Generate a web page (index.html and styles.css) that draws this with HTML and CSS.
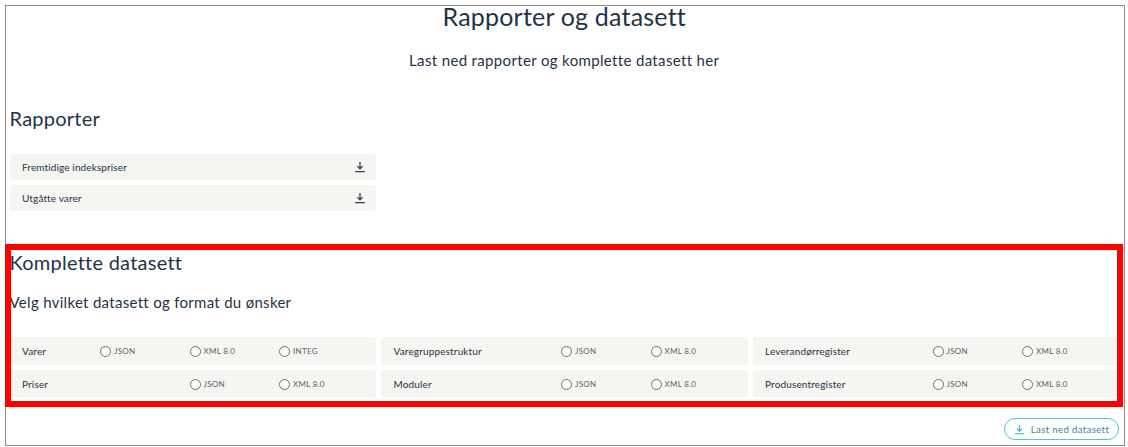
FILE: index.html
```html
<!DOCTYPE html>
<html lang="no">
<head>
<meta charset="utf-8">
<title>Rapporter og datasett</title>
<link rel="stylesheet" href="styles.css">
</head>
<body>
<main class="frame">
  <h1 class="title">Rapporter og datasett</h1>
  <p class="lead">Last ned rapporter og komplette datasett her</p>

  <section class="reports">
    <h2 class="section-title">Rapporter</h2>
    <div class="grid report-list">
      <a class="report"><span>Fremtidige indekspriser</span>
        <svg class="dl" viewBox="0 0 12 12"><path d="M6 1v6.5M3.4 5.2 6 7.8l2.6-2.6M1.2 10.6h9.6"/></svg></a>
      <a class="report report-second"><span>Utgåtte varer</span>
        <svg class="dl" viewBox="0 0 12 12"><path d="M6 1v6.5M3.4 5.2 6 7.8l2.6-2.6M1.2 10.6h9.6"/></svg></a>
    </div>
  </section>

  <section class="datasets">
    <h2 class="section-title">Komplette datasett</h2>
    <p class="choose">Velg hvilket datasett og format du ønsker</p>
    <div class="grid rows">
      <div class="row"><span class="name">Varer</span>
        <label class="opt"><input type="radio" name="d1">JSON</label>
        <label class="opt"><input type="radio" name="d1">XML 8.0</label>
        <label class="opt"><input type="radio" name="d1">INTEG</label></div>
      <div class="row"><span class="name wide">Varegruppestruktur</span>
        <label class="opt"><input type="radio" name="d2">JSON</label>
        <label class="opt"><input type="radio" name="d2">XML 8.0</label></div>
      <div class="row"><span class="name wide">Leverandørregister</span>
        <label class="opt"><input type="radio" name="d3">JSON</label>
        <label class="opt"><input type="radio" name="d3">XML 8.0</label></div>
      <div class="row"><span class="name wide">Priser</span>
        <label class="opt"><input type="radio" name="d4">JSON</label>
        <label class="opt"><input type="radio" name="d4">XML 8.0</label></div>
      <div class="row"><span class="name wide">Moduler</span>
        <label class="opt"><input type="radio" name="d5">JSON</label>
        <label class="opt"><input type="radio" name="d5">XML 8.0</label></div>
      <div class="row"><span class="name wide">Produsentregister</span>
        <label class="opt"><input type="radio" name="d6">JSON</label>
        <label class="opt"><input type="radio" name="d6">XML 8.0</label></div>
    </div>
    <div class="highlight"></div>
  </section>

  <div class="actions">
    <button class="download" type="button">
      <svg class="dl dl-teal" viewBox="0 0 12 12"><path d="M6 1v6.5M3.4 5.2 6 7.8l2.6-2.6M1.2 10.6h9.6"/></svg>
      Last ned datasett
    </button>
  </div>
</main>
</body>
</html>
```

FILE: styles.css
```css
* { box-sizing: border-box; }

html, body { margin: 0; padding: 0; background: #fff; }

body {
  font-family: "Lato", "Liberation Sans", sans-serif;
  color: #1f3347;
}

.frame {
  width: 1120px;
  height: 441px;
  margin: 5px 0 0 5px;
  border: 1px solid #8c8c8c;
  padding: 0 5px 0 3.5px;
}

.title {
  margin: 0;
  height: 26px;
  text-align: center;
  font-size: 25px;
  line-height: 20px;
  font-weight: 400;
  letter-spacing: 0.2px;
}

.lead {
  margin: 18px 0 0;
  text-align: center;
  font-size: 15px;
  line-height: 20px;
  letter-spacing: 0.35px;
}

.section-title {
  margin: 0;
  font-size: 20px;
  line-height: 26px;
  font-weight: 400;
  letter-spacing: 0.25px;
}

.reports { margin-top: 35px; }

.grid {
  display: grid;
  grid-template-columns: repeat(3, 1fr);
  column-gap: 5px;
}

.report-list { margin-top: 23px; }

.report {
  grid-column: 1;
  height: 26px;
  display: flex;
  align-items: center;
  justify-content: space-between;
  padding: 0 10px 0 12.5px;
  background: #f5f5f1;
  border-radius: 3px;
  font-size: 10px;
  letter-spacing: 0.12px;
}

.report-second { margin-top: 5px; }

.dl {
  width: 12px;
  height: 12px;
  fill: none;
  stroke: #2b3a46;
  stroke-width: 1.2;
}

.datasets {
  position: relative;
  margin-top: 38px;
}

.choose {
  margin: 17px 0 0;
  font-size: 15px;
  line-height: 20px;
  letter-spacing: 0.3px;
}

.rows {
  margin-top: 25px;
  row-gap: 5px;
}

.row {
  height: 28px;
  display: grid;
  grid-template-columns: 78px repeat(3, 89.5px);
  align-items: center;
  padding-left: 12.5px;
  background: #f5f5f1;
  border-radius: 3px;
  font-size: 10px;
  letter-spacing: 0.15px;
}

.name.wide { grid-column: 1 / span 2; }

.opt {
  display: flex;
  align-items: center;
  gap: 3px;
  font-size: 8px;
  color: #56616a;
  letter-spacing: 0.3px;
}

.opt input {
  appearance: none;
  width: 11px;
  height: 11px;
  margin: 0;
  border: 1px solid #6f6f6f;
  border-radius: 50%;
  background: #fbfbf9;
}

.highlight {
  position: absolute;
  left: -4.5px;
  right: -4px;
  top: -5px;
  bottom: -9px;
  border: 6px solid #ff0000;
  pointer-events: none;
}

.actions {
  display: flex;
  justify-content: flex-end;
  margin-top: 20px;
}

.download {
  display: flex;
  align-items: center;
  justify-content: center;
  gap: 6px;
  width: 115px;
  height: 22px;
  padding: 0;
  background: #fff;
  border: 1.2px solid #4fc4dc;
  border-radius: 11px;
  font: inherit;
  font-size: 9.5px;
  letter-spacing: 0.4px;
  color: #3f7f92;
}

.dl-teal { stroke: #2fb4d2; width: 11px; height: 11px; }
```
